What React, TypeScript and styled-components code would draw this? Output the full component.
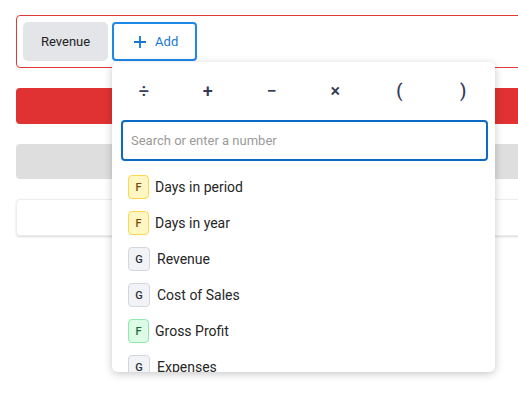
import { FC } from 'react';
import styled, { createGlobalStyle } from 'styled-components';

const GlobalStyle = createGlobalStyle`
  html, body {
    margin: 0;
    padding: 0;
    background: #ffffff;
    font-family: Roboto, 'Liberation Sans', Arial, sans-serif;
  }
`;

type Kind = 'F' | 'G' | 'FG';

interface Item {
  kind: Kind;
  label: string;
}

const items: Item[] = [
  { kind: 'F', label: 'Days in period' },
  { kind: 'F', label: 'Days in year' },
  { kind: 'G', label: 'Revenue' },
  { kind: 'G', label: 'Cost of Sales' },
  { kind: 'FG', label: 'Gross Profit' },
  { kind: 'G', label: 'Expenses' },
];

const operators = ['÷', '+', '−', '×', '(', ')'];

const badgeColors: Record<Kind, { bg: string; border: string; text: string }> = {
  F: { bg: '#fef7c3', border: '#fbd94a', text: '#7c4a0e' },
  G: { bg: '#f1f3f7', border: '#d3d6dc', text: '#2b2f38' },
  FG: { bg: '#dcfce6', border: '#8ee8ad', text: '#1a6a38' },
};

const STPage = styled.div`
  box-sizing: border-box;
  width: 100%;
  height: 100vh;
  overflow: hidden;
  padding: 15px 0 0 16px;
`;

const STContent = styled.div`
  width: 540px;
`;

const STFormulaBox = styled.div`
  position: relative;
  display: flex;
  align-items: center;
  gap: 5px;
  padding: 6px;
  border: 1px solid #e03a3a;
  border-radius: 4px;
`;

const STChip = styled.div`
  display: flex;
  align-items: center;
  height: 39px;
  padding: 0 18px;
  background: #e3e5e9;
  border-radius: 5px;
  font-size: 13px;
  color: #222;
`;

const STAddButton = styled.button`
  display: flex;
  align-items: center;
  justify-content: center;
  gap: 8px;
  box-sizing: border-box;
  width: 85px;
  height: 39px;
  margin-left: -1px;
  padding: 0 0 0 2px;
  background: #fff;
  border: 2px solid #1e88e5;
  border-radius: 4px;
  font-family: inherit;
  font-size: 13px;
  color: #1976d2;
`;

const STBar = styled.div<{ $tone: 'red' | 'gray' | 'card' }>`
  margin-top: 20px;
  height: ${(p) => (p.$tone === 'red' ? 36 : p.$tone === 'gray' ? 35 : 37)}px;
  border-radius: 4px;
  box-sizing: border-box;
  background: ${(p) =>
    p.$tone === 'red' ? '#e03232' : p.$tone === 'gray' ? '#dedede' : '#fff'};
  border: ${(p) => (p.$tone === 'card' ? '1px solid #eeeeee' : 'none')};
  box-shadow: ${(p) =>
    p.$tone === 'card' ? '0 1px 2px rgba(0,0,0,0.15)' : 'none'};
  &:first-of-type {
    margin-top: 21px;
  }
`;

const STDropdown = styled.div`
  position: absolute;
  left: 95px;
  top: 46px;
  width: 383px;
  height: 310px;
  background: #fff;
  border-radius: 6px;
  box-shadow: 0 2px 8px rgba(0, 0, 0, 0.22);
  overflow: hidden;
  z-index: 10;
`;

const STOperators = styled.div`
  display: grid;
  grid-template-columns: repeat(6, 1fr);
  height: 56px;
  align-items: center;
`;

const STOperator = styled.span`
  text-align: center;
  font-size: 18px;
  font-weight: 500;
  color: #363a57;
`;

const STSearch = styled.input`
  display: block;
  box-sizing: border-box;
  width: 367px;
  height: 41px;
  margin: 2px 0 0 9px;
  padding: 0 8px;
  border: 2px solid #0b6bc4;
  border-radius: 4px;
  outline: none;
  font-family: inherit;
  font-size: 13px;
  color: #222;
  &::placeholder {
    color: #9a9a9a;
  }
`;

const STList = styled.div`
  padding-top: 8px;
`;

const STRow = styled.div`
  display: flex;
  align-items: center;
  height: 36px;
  padding-left: 16px;
  font-size: 14px;
  color: #262626;
`;

const STBadge = styled.span<{ $kind: Kind }>`
  display: flex;
  align-items: center;
  justify-content: center;
  box-sizing: border-box;
  width: ${(p) => (p.$kind === 'G' ? 22 : 21)}px;
  height: 24px;
  margin-right: ${(p) => (p.$kind === 'G' ? 7 : 6)}px;
  border-radius: 4px;
  font-size: 11px;
  font-weight: 500;
  background: ${(p) => badgeColors[p.$kind].bg};
  border: 1px solid ${(p) => badgeColors[p.$kind].border};
  color: ${(p) => badgeColors[p.$kind].text};
`;

const PlusIcon: FC = () => (
  <svg width="14" height="14" viewBox="0 0 14 14">
    <path d="M7 1v12M1 7h12" stroke="#1976d2" strokeWidth="1.8" />
  </svg>
);

const App: FC = () => (
  <>
    <GlobalStyle />
    <STPage>
      <STContent>
        <STFormulaBox>
          <STChip>Revenue</STChip>
          <STAddButton>
            <PlusIcon />
            Add
          </STAddButton>
          <STDropdown>
            <STOperators>
              {operators.map((op) => (
                <STOperator key={op}>{op}</STOperator>
              ))}
            </STOperators>
            <STSearch placeholder="Search or enter a number" />
            <STList>
              {items.map((item) => (
                <STRow key={item.label}>
                  <STBadge $kind={item.kind}>{item.kind === 'G' ? 'G' : 'F'}</STBadge>
                  {item.label}
                </STRow>
              ))}
            </STList>
          </STDropdown>
        </STFormulaBox>
        <STBar $tone="red" />
        <STBar $tone="gray" />
        <STBar $tone="card" />
      </STContent>
    </STPage>
  </>
);

export default App;
